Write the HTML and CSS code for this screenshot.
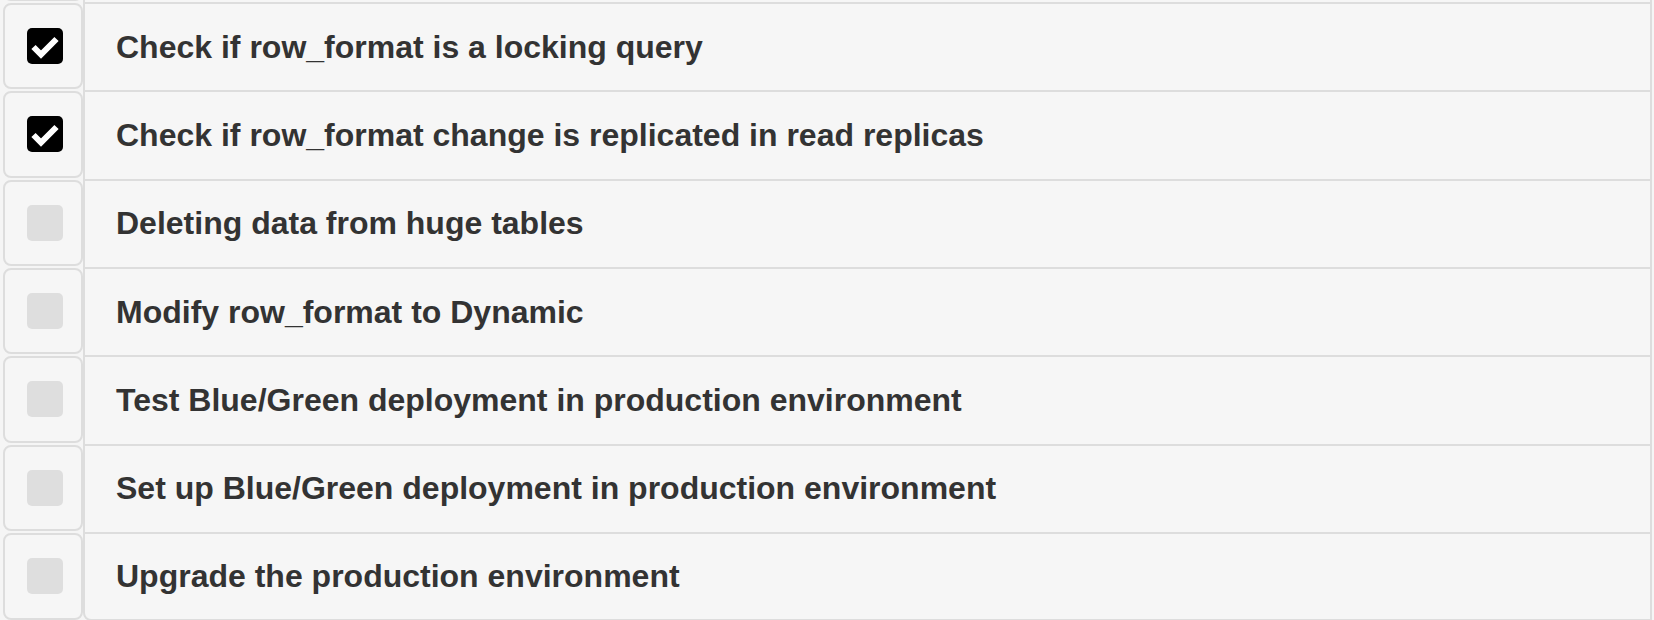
FILE: index.html
```html
<!DOCTYPE html>
<html lang="en">
<head>
<meta charset="utf-8">
<title>Checklist</title>
<link rel="stylesheet" href="styles.css">
</head>
<body>
<ul class="checklist">
  <li class="item item--peek" aria-hidden="true">
    <span class="check-cell"></span>
    <span class="label-cell"></span>
  </li>
  <li class="item">
    <span class="check-cell"><span class="box box--checked"><svg viewBox="0 0 36 36" width="36" height="36"><path d="M6.5 19 L14 26.5 L29.5 11" fill="none" stroke="#fff" stroke-width="6" stroke-linejoin="miter"/></svg></span></span>
    <span class="label-cell">Check if row_format is a locking query</span>
  </li>
  <li class="item">
    <span class="check-cell"><span class="box box--checked"><svg viewBox="0 0 36 36" width="36" height="36"><path d="M6.5 19 L14 26.5 L29.5 11" fill="none" stroke="#fff" stroke-width="6" stroke-linejoin="miter"/></svg></span></span>
    <span class="label-cell">Check if row_format change is replicated in read replicas</span>
  </li>
  <li class="item">
    <span class="check-cell"><span class="box"></span></span>
    <span class="label-cell">Deleting data from huge tables</span>
  </li>
  <li class="item">
    <span class="check-cell"><span class="box"></span></span>
    <span class="label-cell">Modify row_format to Dynamic</span>
  </li>
  <li class="item">
    <span class="check-cell"><span class="box"></span></span>
    <span class="label-cell">Test Blue/Green deployment in production environment</span>
  </li>
  <li class="item">
    <span class="check-cell"><span class="box"></span></span>
    <span class="label-cell">Set up Blue/Green deployment in production environment</span>
  </li>
  <li class="item item--last">
    <span class="check-cell"><span class="box"></span></span>
    <span class="label-cell">Upgrade the production environment</span>
  </li>
</ul>
</body>
</html>
```
FILE: styles.css
```css
html, body {
  margin: 0;
  padding: 0;
  background: #f5f5f5;
  overflow: hidden;
}

body {
  font-family: "Liberation Sans", Arial, Helvetica, sans-serif;
  color: #333;
}

.checklist {
  list-style: none;
  margin: -86.33px 0 0 0;
  padding: 0;
  display: flex;
  flex-direction: column;
}

.item {
  display: flex;
  height: 88.33px;
  box-sizing: border-box;
}

.item--last {
  height: 89px;
}

.check-cell {
  flex: 0 0 80px;
  margin: 1px 0 1px 3px;
  box-sizing: border-box;
  border: 2px solid #dddddd;
  border-radius: 8px;
  background: #f6f6f6;
  display: flex;
  align-items: center;
  justify-content: center;
  padding-left: 3px;
}

.box {
  width: 36px;
  height: 36px;
  border-radius: 5px;
  background: #dedede;
  display: block;
}

.box svg {
  display: block;
}

.box--checked {
  background: #000;
}

.label-cell {
  flex: 1 1 auto;
  margin-right: 2px;
  box-sizing: border-box;
  border-top: 2px solid #dddddd;
  border-left: 2px solid #dddddd;
  border-right: 2px solid #dddddd;
  background: #f6f6f6;
  display: flex;
  align-items: center;
  padding-left: 31px;
  font-size: 32px;
  font-weight: bold;
  white-space: nowrap;
}

.item--last .label-cell {
  border-bottom: 2px solid #dddddd;
  border-bottom-left-radius: 8px;
}
```
